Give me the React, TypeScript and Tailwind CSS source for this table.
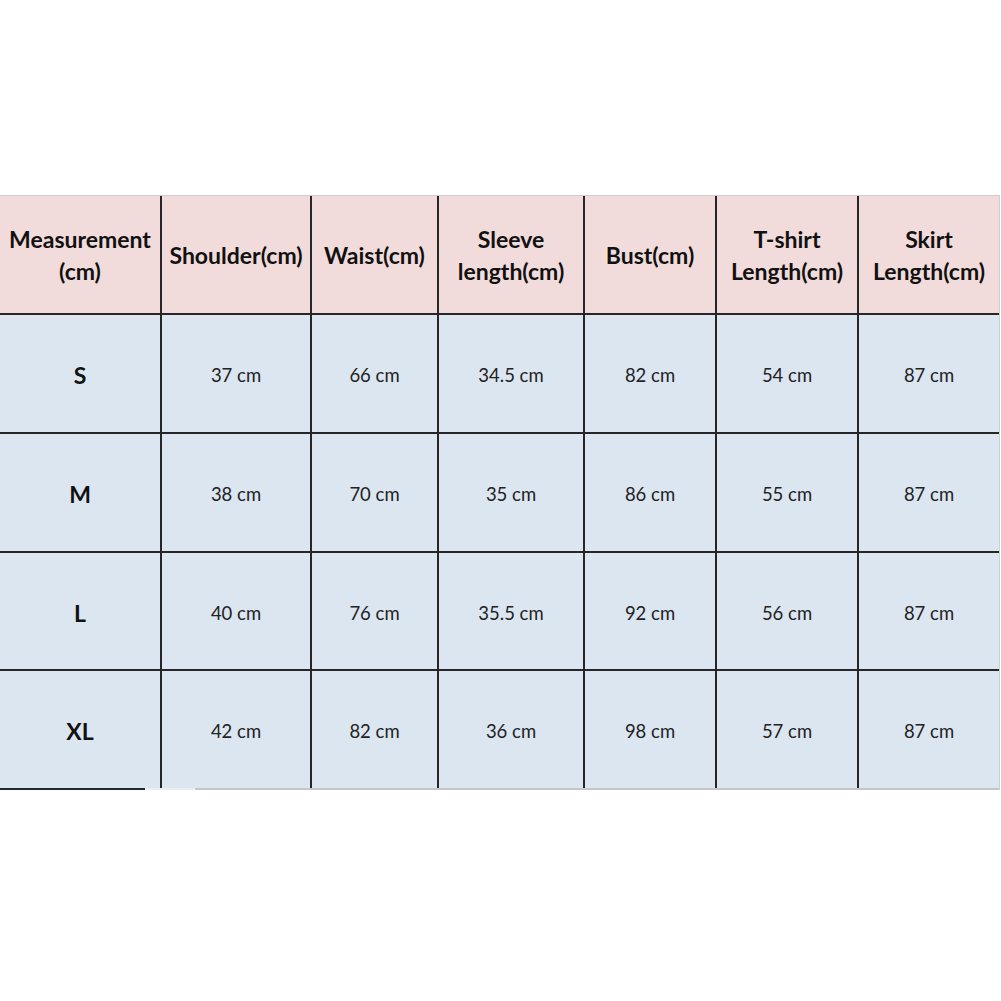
import React from "react";

const headers: React.ReactNode[] = [
  <>Measurement<br />(cm)</>,
  <>Shoulder(cm)</>,
  <>Waist(cm)</>,
  <>Sleeve<br />length(cm)</>,
  <>Bust(cm)</>,
  <>T-shirt<br />Length(cm)</>,
  <>Skirt<br />Length(cm)</>,
];

const rows: string[][] = [
  ["S", "37 cm", "66 cm", "34.5 cm", "82 cm", "54 cm", "87 cm"],
  ["M", "38 cm", "70 cm", "35 cm", "86 cm", "55 cm", "87 cm"],
  ["L", "40 cm", "76 cm", "35.5 cm", "92 cm", "56 cm", "87 cm"],
  ["XL", "42 cm", "82 cm", "36 cm", "98 cm", "57 cm", "87 cm"],
];

export default function App() {
  return (
    <div
      className="w-[1001px] h-[1001px] bg-white pt-[195px]"
      style={{ fontFamily: "Lato, 'Open Sans', sans-serif" }}
    >
      <div className="w-[1000px] border-t border-r border-l-0 border-[#cfcfcf]">
        <div className="grid grid-cols-[160px_148px_125px_144px_130px_140px_140px] grid-rows-[117px_117px_117px_116px_117px] gap-[2px] bg-[#262626]">
          {headers.map((h, i) => (
            <div
              key={i}
              className="bg-[#f2dcdb] flex items-center justify-center text-center text-[23px] leading-[32px] font-bold text-[#111] pt-[1px] whitespace-nowrap"
            >
              <div>{h}</div>
            </div>
          ))}
          {rows.map((r, ri) =>
            r.map((c, ci) => (
              <div
                key={ri + "-" + ci}
                className={
                  ci === 0
                    ? "bg-[#dce6f1] flex items-center justify-center text-[23px] font-bold text-[#111] pt-[4px]"
                    : "bg-[#dce6f1] flex items-center justify-center text-[18.5px] text-[#222] pt-[5px]"
                }
              >
                {c}
              </div>
            ))
          )}
        </div>
        <div className="flex h-[2px]">
          <div className="w-[145px] bg-[#1f2a33]"></div>
          <div className="w-[50px] bg-[#e8eef5]"></div>
          <div className="flex-1 bg-[#c6c6ca]"></div>
        </div>
      </div>
    </div>
  );
}
